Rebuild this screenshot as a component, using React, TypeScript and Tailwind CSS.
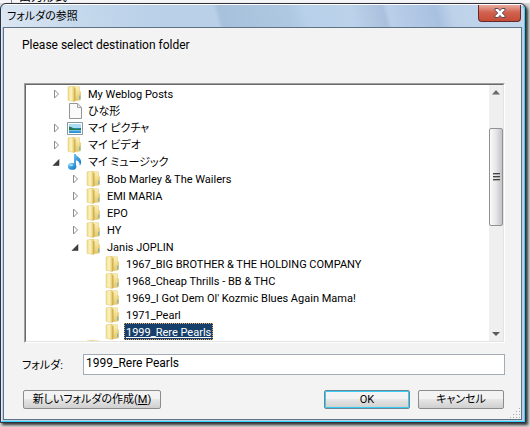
import { useState } from 'react'
import type { ReactNode } from 'react'

type IconKind = 'folder' | 'page' | 'picture' | 'music'

type TreeItem = {
  label: string
  level: 0 | 1 | 2
  icon: IconKind
  state?: 'open' | 'closed'
}

const items: TreeItem[] = [
  { label: 'My Weblog Posts', level: 0, icon: 'folder', state: 'closed' },
  { label: 'ひな形', level: 0, icon: 'page' },
  { label: 'マイ ピクチャ', level: 0, icon: 'picture', state: 'closed' },
  { label: 'マイ ビデオ', level: 0, icon: 'folder', state: 'closed' },
  { label: 'マイ ミュージック', level: 0, icon: 'music', state: 'open' },
  { label: 'Bob Marley & The Wailers', level: 1, icon: 'folder', state: 'closed' },
  { label: 'EMI MARIA', level: 1, icon: 'folder', state: 'closed' },
  { label: 'EPO', level: 1, icon: 'folder', state: 'closed' },
  { label: 'HY', level: 1, icon: 'folder', state: 'closed' },
  { label: 'Janis JOPLIN', level: 1, icon: 'folder', state: 'open' },
  { label: '1967_BIG BROTHER & THE HOLDING COMPANY', level: 2, icon: 'folder' },
  { label: '1968_Cheap Thrills - BB & THC', level: 2, icon: 'folder' },
  { label: "1969_I Got Dem Ol' Kozmic Blues Again Mama!", level: 2, icon: 'folder' },
  { label: '1971_Pearl', level: 2, icon: 'folder' },
  { label: '1999_Rere Pearls', level: 2, icon: 'folder' },
]

const indent = { 0: 'pl-[26px]', 1: 'pl-[45px]', 2: 'pl-[64px]' }

function FolderIcon() {
  return (
    <svg viewBox="0 0 16 16" className="size-4 shrink-0" aria-hidden="true">
      <defs>
        <linearGradient id="flap" x1="0" x2="1">
          <stop offset="0" stopColor="#f0dc84" />
          <stop offset=".5" stopColor="#fcf5c4" />
          <stop offset="1" stopColor="#e5c765" />
        </linearGradient>
        <linearGradient id="back" x1="0" y1="0" x2="0" y2="1">
          <stop offset="0" stopColor="#fbf2b8" />
          <stop offset="1" stopColor="#e6c766" />
        </linearGradient>
      </defs>
      <path d="M6 .5 12.500.8v13.400L6 15z" fill="url(#back)" stroke="#e0c878" strokeWidth=".5" />
      <path d="M12.300 5.500h1.700v8l-1.700.9z" fill="#ead07a" />
      <path d="M1 1 6.500 0l.8 1.200v14.300L1 14.300z" fill="url(#flap)" stroke="#dfc470" strokeWidth=".5" />
      <path d="M7.200 2.300 8.500 1.800v12.800l-1.300.9z" fill="#cfac4b" />
      <path d="M12.800 9.500v4" stroke="#50a9d5" strokeWidth=".9" />
    </svg>
  )
}

function PageIcon() {
  return (
    <svg viewBox="0 0 16 16" className="size-4 shrink-0" aria-hidden="true">
      <path d="M2.500.5h8.200l3.800 3.800v11.200h-12z" fill="#fafafa" stroke="#969696" />
      <path d="M10.500.8v3.700h3.700" fill="#e4e4e4" stroke="#a5a5a5" />
    </svg>
  )
}

function PictureIcon() {
  return (
    <svg viewBox="0 0 16 16" className="size-4 shrink-0" aria-hidden="true">
      <path d="M.5 2.500h15v12H.5z" fill="#fff" stroke="#8b969f" />
      <path d="M2 4h12v9H2z" fill="#2c91d2" />
      <path d="M2 4h12v4H2z" fill="#a9dcf5" />
      <path d="M2 6.500q3 .2 5 2.200 4 .5 7-.8V10H2z" fill="#27764c" />
      <path d="M2 10h12v1.200H2z" fill="#75c4e7" />
    </svg>
  )
}

function MusicIcon() {
  return (
    <svg viewBox="0 0 16 16" className="size-4 shrink-0" aria-hidden="true">
      <defs>
        <linearGradient id="note" x1="0" y1="0" x2="1" y2="1">
          <stop offset="0" stopColor="#6ac2f2" />
          <stop offset="1" stopColor="#0c75c2" />
        </linearGradient>
      </defs>
      <path d="M7 0h1.800c.4 2.500 5.400 3.900 5.400 7.700 0 1.500-.7 3-1.600 4 .5-3-.9-4.600-3.600-5.400V12H7z" fill="url(#note)" />
      <ellipse cx="5.200" cy="12.400" rx="4.200" ry="3.400" fill="url(#note)" />
      <ellipse cx="4.200" cy="11.200" rx="2" ry="1.100" fill="#9cdcf8" />
    </svg>
  )
}

const icons: Record<IconKind, ReactNode> = {
  folder: <FolderIcon />,
  page: <PageIcon />,
  picture: <PictureIcon />,
  music: <MusicIcon />,
}

function Expander({ state }: { state?: 'open' | 'closed' }) {
  return (
    <svg viewBox="0 0 15 16" className="h-4 w-[15px] shrink-0" aria-hidden="true">
      {state === 'closed' && <path d="M2.500 4v8l4-4z" fill="#fff" stroke="#8c8c8c" />}
      {state === 'open' && <path d="M7 5.500v6H1z" fill="#404040" stroke="#222" strokeWidth=".5" />}
    </svg>
  )
}

function ScrollBar() {
  return (
    <div className="flex w-[14px] flex-col items-center bg-[#efefef]" aria-hidden="true">
      <svg viewBox="0 0 14 43" className="h-[43px] w-full">
        <path d="M3 9.500h8L7 5z" fill="#6a6a6a" />
      </svg>
      <div className="flex h-[98px] w-full flex-col items-center justify-center rounded-xs border border-[#929292] bg-linear-to-r from-[#fafafa] via-[#e6e6e8] to-[#c3c3c7]">
        <svg viewBox="0 0 7 9" className="h-[9px] w-[7px]">
          <path d="M0 .5h7M0 3.500h7M0 6.500h7" stroke="#444" />
          <path d="M0 1.500h7M0 4.500h7M0 7.500h7" stroke="#aaa" />
        </svg>
      </div>
      <div className="flex-1" />
      <svg viewBox="0 0 14 14" className="size-[14px]">
        <path d="M3 5h8l-4 4z" fill="#5a5a5a" />
      </svg>
    </div>
  )
}

function ResizeGrip() {
  return (
    <svg viewBox="0 0 11 11" className="absolute right-0 bottom-0 size-[11px]" aria-hidden="true">
      <path
        d="M9 0h1v1H9zM6 3h1v1H6zM9 3h1v1H9zM3 6h1v1H3zM6 6h1v1H6zM9 6h1v1H9zM0 9h1v1H0zM3 9h1v1H3zM6 9h1v1H6zM9 9h1v1H9z"
        fill="#a8a8a8"
      />
    </svg>
  )
}

const buttonStyle =
  'h-[19px] rounded-xs border bg-linear-to-b from-[#f3f3f3] from-45% via-[#e6e6e6] via-50% to-[#cfcfcf] text-center leading-4'

function App() {
  const [selected, setSelected] = useState('1999_Rere Pearls')

  return (
    <div className="bg-[#f6f6f8] font-[Roboto,'Noto_Sans_CJK_JP',sans-serif] text-[11px] text-black [font-feature-settings:'palt']">
      {/* Window behind */}
      <div className="flex h-[3px] items-end overflow-hidden pl-[11px] text-[12px] leading-3">
        <span className="border-l border-[#888] pl-[7px]">出力形式</span>
      </div>

      <div className="bg-[#d8d8d8] pr-1 pb-1">
        {/* Dialog */}
        <main className="rounded-t-md border border-[#31313b] bg-[#b9d1ea] shadow-[2px_2px_3px_#333]">
          <div className="rounded-t-md border border-t-white border-r-[#35d3fa] border-b-[#35d3fa] border-l-[#dcecf8]">
            <header className="flex h-[22px] items-start justify-between rounded-t-md bg-[linear-gradient(75deg,#dce7f2_0%,#c6d9ec_14%,#b9d0e8_30%,#b9d0e8_41%,#a7c1dc_42%,#aec8e2_55%,#b8d0e9_58%,#bbd2ea_67%,#aac0dd_73%,#b9cfea_74%,#a9c1e0_83%,#bdd2e9_86%,#c4d8ec_100%)] pr-[3px] pl-[5px]">
              <h1 className="leading-6">フォルダの参照</h1>
              <button
                type="button"
                aria-label="閉じる"
                className="flex h-[17px] w-[43px] items-center justify-center rounded-b-sm border border-t-0 border-[#65282b] bg-linear-to-b from-[#e6aaa0] from-0% via-[#d2634f] via-45% to-[#c64c36]"
              >
                <svg viewBox="0 0 12 10" className="h-[10px] w-3">
                  <path
                    d="M1 .5h3.200L6 2.600 7.800.5H11v1.700L8.300 5 11 7.800v1.700H7.800L6 7.400 4.200 9.500H1V7.800L3.700 5 1 2.200z"
                    fill="#fff"
                    stroke="#5a4b58"
                  />
                </svg>
              </button>
            </header>

            <div className="relative mr-[2px] mb-px ml-px border border-[#5f7385] bg-[#f3f3f3] pt-[9px] pr-4 pb-[10px] pl-[18px]">
              <p className="text-[12px] leading-4">Please select destination folder</p>

              {/* Folder tree */}
              <div className="mt-[30px] ml-[2px] flex h-[260px] border border-t-[#a0a0a0] border-r-white border-b-white border-l-[#a0a0a0]">
                <div className="flex min-w-0 flex-1 border border-t-[#696969] border-r-[#e3e3e3] border-b-[#e3e3e3] border-l-[#696969] bg-white">
                  <div role="tree" aria-label="フォルダ" className="flex min-w-0 flex-1 flex-col overflow-hidden">
                    {items.map((item) => (
                      <div
                        key={item.label}
                        role="treeitem"
                        aria-selected={selected === item.label}
                        onClick={() => setSelected(item.label)}
                        className={`flex h-[17px] shrink-0 items-center whitespace-nowrap ${indent[item.level]}`}
                      >
                        <Expander state={item.state} />
                        {icons[item.icon]}
                        <span
                          className={`ml-[3px] h-[17px] border px-px leading-[18px] ${
                            selected === item.label
                              ? 'border-dotted border-[#e8a860] bg-[#173f6b] text-white underline'
                              : 'border-transparent'
                          }`}
                        >
                          {item.label}
                        </span>
                      </div>
                    ))}
                    <div className="flex shrink-0 pl-[60px]">
                      <FolderIcon />
                    </div>
                  </div>
                  <ScrollBar />
                </div>
              </div>

              <div className="mt-[11px] flex items-center">
                <label htmlFor="folder" className="w-[61px] pt-1">
                  フォルダ:
                </label>
                <input
                  id="folder"
                  value={selected}
                  onChange={(e) => setSelected(e.target.value)}
                  className="h-[21px] min-w-0 flex-1 border border-[#a3adb8] bg-white px-[2px] pb-[3px] text-[12px]"
                />
              </div>

              <div className="mt-[15px] flex gap-2 px-px">
                <button type="button" className={`${buttonStyle} mr-auto w-[138px] border-[#8c8c8c]`}>
                  新しいフォルダの作成(<u>M</u>)
                </button>
                <button type="button" className={`${buttonStyle} w-[86px] border-[#6f8794] inset-ring inset-ring-[#35cdf4]`}>
                  OK
                </button>
                <button type="button" className={`${buttonStyle} w-[86px] border-[#8c8c8c]`}>
                  キャンセル
                </button>
              </div>
              <ResizeGrip />
            </div>
          </div>
        </main>
      </div>
    </div>
  )
}

export default App
